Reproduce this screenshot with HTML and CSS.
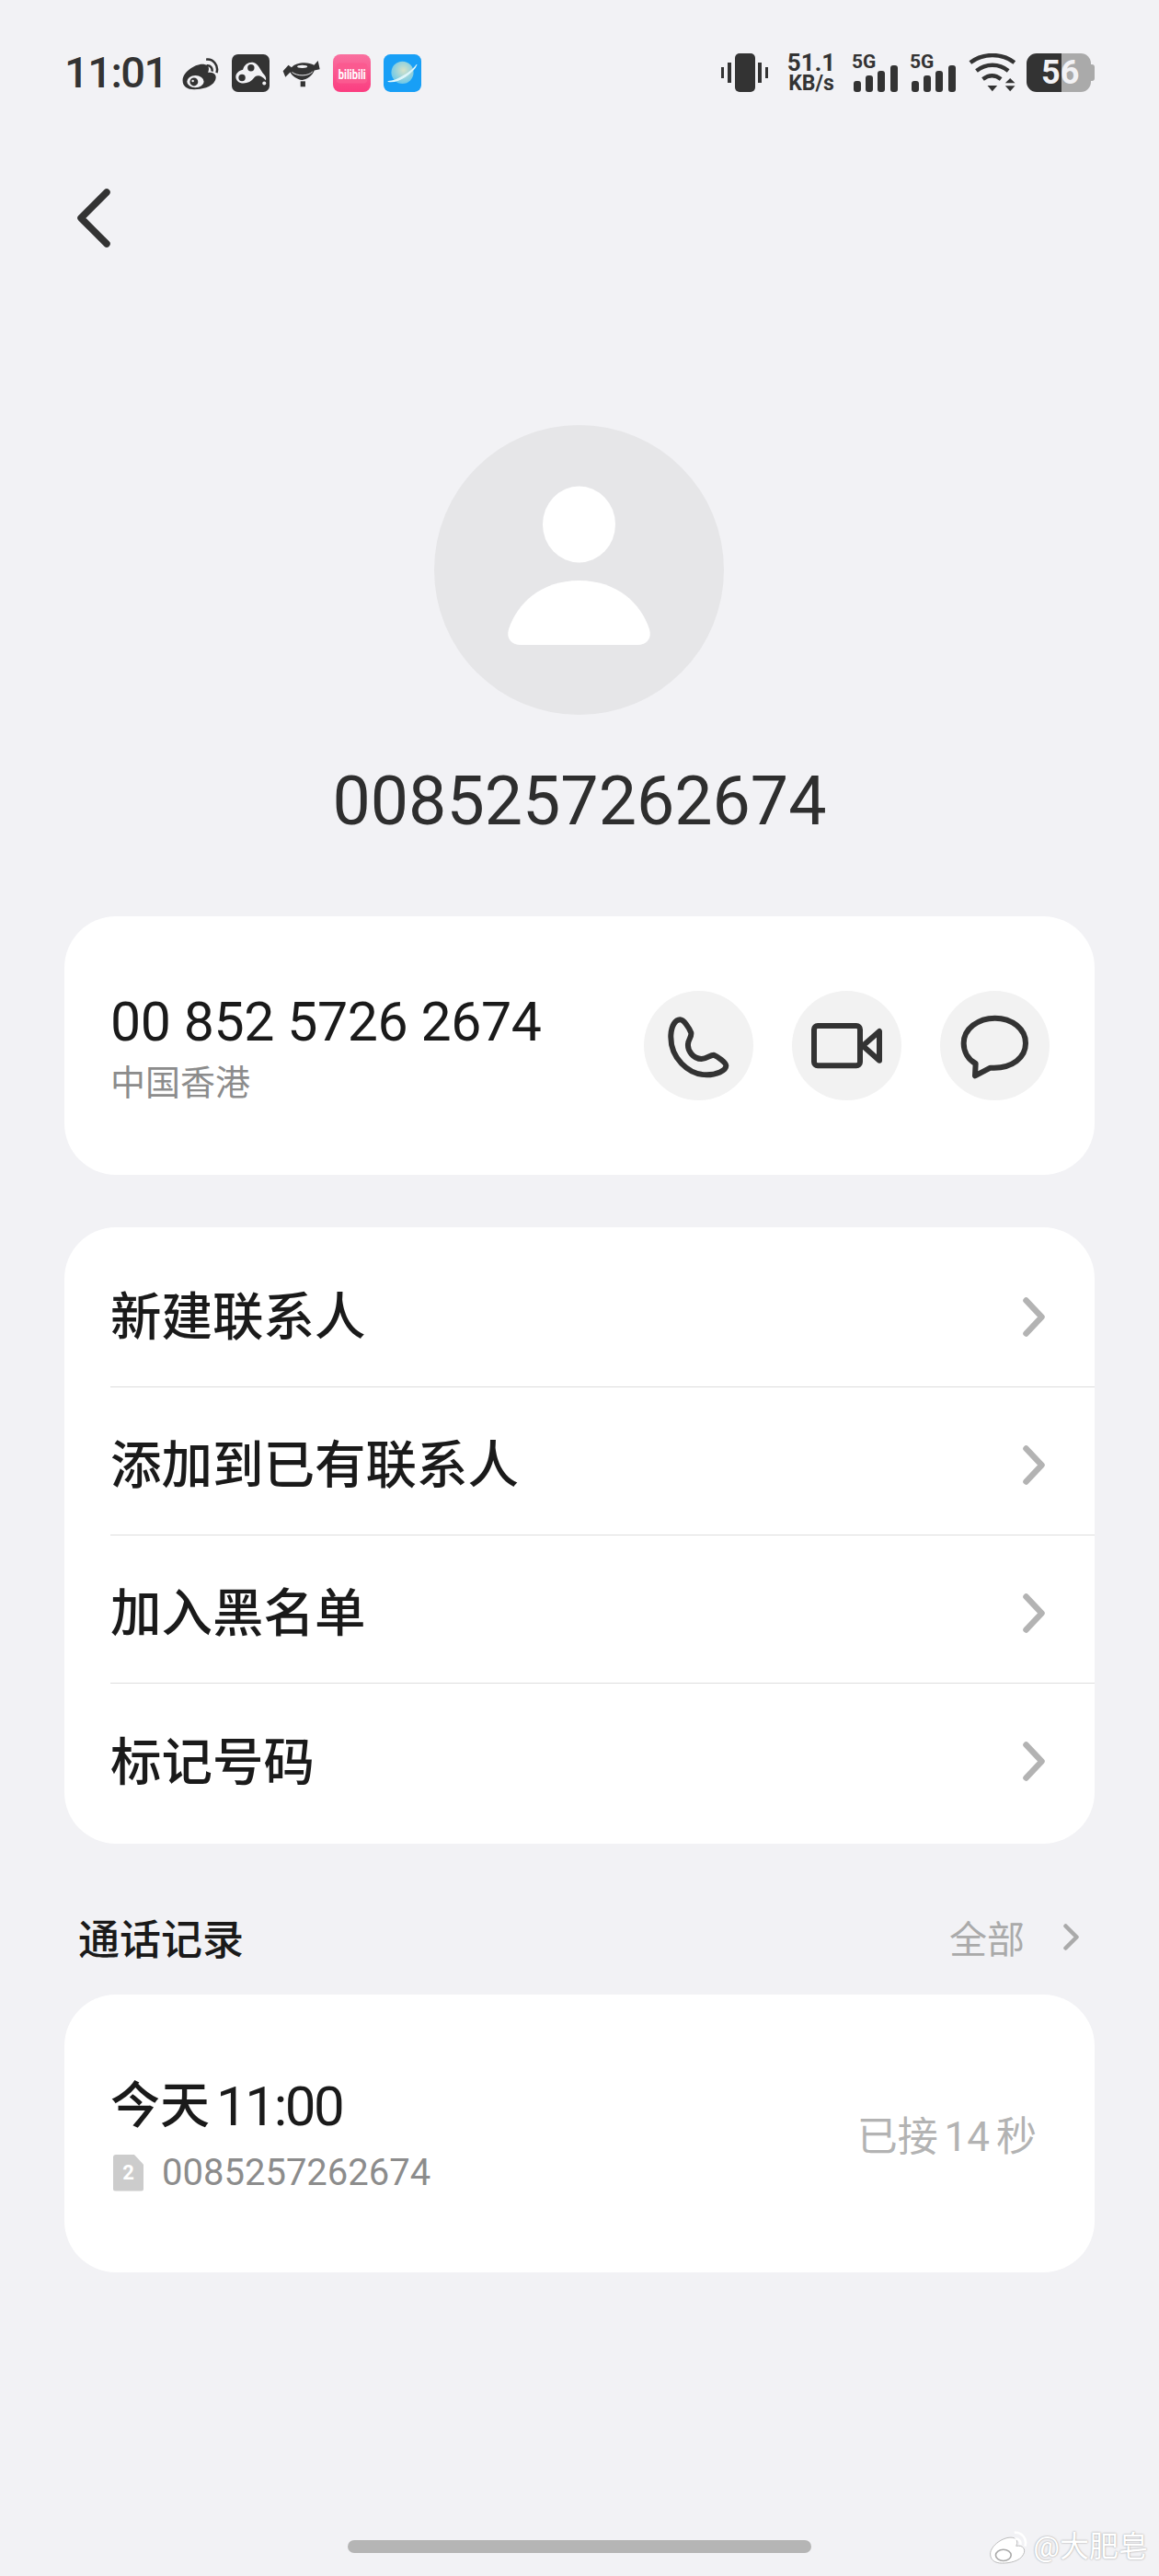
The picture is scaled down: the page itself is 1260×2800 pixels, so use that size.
FILE: index.html
```html
<!DOCTYPE html>
<html lang="zh-CN">
<head>
    <meta charset="UTF-8">
    <meta name="viewport" content="width=device-width, initial-scale=1.0">
    <title>0085257262674</title>
    <link rel="stylesheet" href="styles.css">
</head>
<body>
    <div class="page">
        <div class="status">
            <div class="status-left">
                <span class="time">11:01</span>
                <svg class="app-icon" viewBox="470 84 130 122">
                    <path class="ink" d="M475 170C475 142 520 110 550 115C566 118 568 131 562 143C585 139 596 155 586 172C575 194 540 201 515 201C490 201 475 190 475 170Z"/>
                    <ellipse cx="519" cy="174" rx="29" ry="21" fill="#f2f2f5"/>
                    <circle cx="514" cy="175" r="14" fill="#333"/>
                    <circle cx="510" cy="172" r="4" fill="#f2f2f5"/>
                    <path class="ink-line" d="M556 98C580 95 600 118 592 144M558 119C570 117 579 127 576 139"/>
                </svg>
                <svg class="app-icon" viewBox="640 84 122 122">
                    <rect x="640" y="84" width="122" height="122" rx="20" fill="#333"/>
                    <path d="M676 134C680 116 695 108 708 110C728 114 730 134 745 150C750 156 752 162 750 168C735 152 722 148 712 160C700 178 672 184 658 170C646 156 656 138 676 134Z" fill="#f2f2f5"/>
                    <circle cx="702" cy="128" r="11" fill="#333"/>
                    <circle cx="673" cy="160" r="11" fill="#333"/>
                    <circle cx="745" cy="178" r="6" fill="#f2f2f5"/>
                </svg>
                <svg class="app-icon" viewBox="800 84 125 122">
                    <path class="ink" d="M802 138L820 118L830 126C845 108 885 106 905 118L918 104L924 132L906 136C900 154 880 166 866 168C848 166 832 154 826 142L810 158Z"/>
                    <path d="M832 142C850 156 885 156 900 140" fill="none" stroke="#f2f2f5" stroke-width="3"/>
                    <ellipse cx="866" cy="123" rx="17" ry="5" fill="#f2f2f5"/>
                    <rect x="860" y="172" width="16" height="18" class="ink"/>
                </svg>
                <svg class="app-icon" viewBox="967 84 122 122">
                    <defs>
                        <linearGradient id="bili" x1="0" y1="0" x2="0" y2="1">
                            <stop offset="0" stop-color="#f9709f"/>
                            <stop offset="1" stop-color="#fb3d80"/>
                        </linearGradient>
                        <radialGradient id="planet" cx="0.55" cy="0.4" r="0.7">
                            <stop offset="0" stop-color="#d6e2c8"/>
                            <stop offset="1" stop-color="#5cc4ee"/>
                        </radialGradient>
                    </defs>
                    <rect x="967" y="84" width="122" height="122" rx="24" fill="url(#bili)"/>
                    <rect x="978" y="112" width="100" height="66" rx="12" fill="#fb5a90"/>
                    <text class="bili-text" transform="translate(984 164) scale(1 1.4)">bilibili</text>
                </svg>
                <svg class="app-icon" viewBox="1131 84 122 122">
                    <rect x="1131" y="84" width="122" height="122" rx="22" fill="#189ff6"/>
                    <circle cx="1192" cy="143" r="36" fill="url(#planet)"/>
                    <path d="M1146 172C1175 172 1222 140 1238 118C1228 142 1180 178 1146 172Z" fill="#dff6fb" stroke="#dff6fb" stroke-width="3" stroke-linejoin="round"/>
                </svg>
            </div>
            <div class="status-right">
                <svg class="vibrate" viewBox="0 0 51 42">
                    <rect x="15" y="0" width="22" height="42" rx="5" class="ink"/>
                    <rect x="7" y="10" width="4" height="22" class="ink"/>
                    <rect x="0" y="15" width="3" height="12" class="ink"/>
                    <rect x="40" y="10" width="4" height="22" class="ink"/>
                    <rect x="48" y="15" width="3" height="12" class="ink"/>
                </svg>
                <div class="speed">
                    <span class="speed-num">51.1</span>
                    <span class="speed-unit">KB/s</span>
                </div>
                <div class="signal">
                    <span class="signal-label">5G</span>
                    <svg viewBox="0 0 48 29">
                        <rect x="0" y="17" width="8" height="12" rx="3" class="ink"/>
                        <rect x="13" y="11" width="8" height="18" rx="3" class="ink"/>
                        <rect x="26" y="6" width="8" height="23" rx="3" class="ink"/>
                        <rect x="40" y="0" width="8" height="29" rx="3" class="ink"/>
                    </svg>
                </div>
                <div class="signal">
                    <span class="signal-label">5G</span>
                    <svg viewBox="0 0 48 29">
                        <rect x="0" y="17" width="8" height="12" rx="3" class="ink"/>
                        <rect x="13" y="11" width="8" height="18" rx="3" class="ink"/>
                        <rect x="26" y="6" width="8" height="23" rx="3" class="ink"/>
                        <rect x="40" y="0" width="8" height="29" rx="3" class="ink"/>
                    </svg>
                </div>
                <svg class="wifi" viewBox="876 84 158 126">
                    <path class="wifi-line" d="M884 114C925 82 988 82 1028 114M904 141C935 116 978 116 1008 141M925 168C945 153 965 153 984 168"/>
                    <path class="ink" d="M940 189H972L956 208ZM998 181L1014 165L1030 181ZM998 190H1030L1014 208Z"/>
                </svg>
                <div class="battery">56</div>
            </div>
        </div>

        <svg class="back" viewBox="0 0 40 64">
            <path d="M34 4L6 32L34 60" fill="none" stroke="#333" stroke-width="7.5" stroke-linecap="round" stroke-linejoin="round"/>
        </svg>

        <div class="avatar">
            <svg viewBox="0 0 315 315">
                <ellipse cx="157.500" cy="108" rx="39.500" ry="41.500" fill="#fff"/>
                <path d="M157.500 169C116 169 90 194 81 222C78 232 84 239 94 239H221C231 239 237 232 234 222C225 194 199 169 157.500 169Z" fill="#fff"/>
            </svg>
        </div>
        <div class="name">0085257262674</div>

        <div class="card card-number">
            <div class="number-info">
                <div class="number">00 852 5726 2674</div>
                <div class="region">中国香港</div>
            </div>
            <div class="actions">
                <div class="action">
                    <svg viewBox="120 111 357 357">
                        <path class="action-line" d="M238 205C222 205 210 225 208 255C205 330 265 385 325 385C355 385 388 372 388 355C388 345 360 325 348 320C335 320 325 333 308 333C280 333 262 305 264 285C264 270 276 262 274 248C268 232 250 205 238 205Z"/>
                    </svg>
                </div>
                <div class="action">
                    <svg viewBox="603 111 357 357">
                        <rect class="action-line" x="675" y="225" width="150" height="130" rx="12"/>
                        <path class="action-line" d="M834 290L888 243V338Z"/>
                    </svg>
                </div>
                <div class="action">
                    <svg viewBox="1086 111 357 357">
                        <path class="action-line" d="M1265 200C1320 200 1365 235 1365 282C1365 330 1320 362 1262 362H1250L1200 388L1202 348C1178 335 1163 310 1163 282C1163 235 1210 200 1265 200Z"/>
                    </svg>
                </div>
            </div>
        </div>

        <div class="card card-menu">
            <div class="row"><span>新建联系人</span><svg class="chevron" viewBox="0 0 24 43"><path d="M3.500 3.500L20.500 21.500L3.500 39.500"/></svg></div>
            <div class="row"><span>添加到已有联系人</span><svg class="chevron" viewBox="0 0 24 43"><path d="M3.500 3.500L20.500 21.500L3.500 39.500"/></svg></div>
            <div class="row"><span>加入黑名单</span><svg class="chevron" viewBox="0 0 24 43"><path d="M3.500 3.500L20.500 21.500L3.500 39.500"/></svg></div>
            <div class="row"><span>标记号码</span><svg class="chevron" viewBox="0 0 24 43"><path d="M3.500 3.500L20.500 21.500L3.500 39.500"/></svg></div>
        </div>

        <div class="section-head">
            <span class="section-title">通话记录</span>
            <span class="section-all">全部<svg class="chevron-small" viewBox="0 0 17 29"><path d="M2.500 2.500L14.500 14.500L2.500 26.500"/></svg></span>
        </div>

        <div class="card card-log">
            <div class="log-info">
                <div class="log-time"><span class="log-day">今天</span><span class="log-clock">11:00</span></div>
                <div class="log-number">
                    <span class="sim">2</span>
                    <span>0085257262674</span>
                </div>
            </div>
            <div class="log-result">已接 14 秒</div>
        </div>

        <div class="home-bar"></div>

        <div class="watermark">
            <svg viewBox="470 84 130 122">
                <path d="M475 170C475 142 520 110 550 115C566 118 568 131 562 143C585 139 596 155 586 172C575 194 540 201 515 201C490 201 475 190 475 170Z" fill="#fff" stroke="#bbb" stroke-width="3"/>
                <ellipse cx="519" cy="174" rx="26" ry="19" fill="none" stroke="#aaa" stroke-width="5"/>
                <path d="M556 98C580 95 600 118 592 144M558 119C570 117 579 127 576 139" fill="none" stroke="#fff" stroke-width="8"/>
            </svg>
            <span>@大肥皂</span>
        </div>
    </div>
</body>
</html>
```

FILE: styles.css
```css
* {
    box-sizing: border-box;
}
body {
    margin: 0;
    background-color: #f2f2f5;
    font-family: Roboto, "Noto Sans CJK SC", sans-serif;
    color: #1a1a1a;
}
.page {
    position: relative;
    width: 1260px;
    height: 2800px;
    overflow: hidden;
    padding: 58px 70px 0;
}
.ink {
    fill: #333;
}
.ink-line {
    fill: none;
    stroke: #333;
    stroke-width: 8;
}

/* status bar */
.status {
    display: flex;
    justify-content: space-between;
    align-items: center;
    height: 42px;
}
.status-left {
    display: flex;
    align-items: center;
}
.time {
    width: 127px;
    font-size: 47px;
    font-weight: 500;
    line-height: 42px;
    color: #333;
    letter-spacing: -1.5px;
}
.app-icon {
    width: 41px;
    height: 41px;
    margin-right: 14px;
}
.bili-text {
    font-size: 33px;
    font-weight: 700;
    fill: #fff;
}
.status-right {
    display: flex;
    align-items: center;
}
.vibrate {
    width: 51px;
    height: 42px;
    margin-right: 22px;
}
.speed {
    display: flex;
    flex-direction: column;
    align-items: center;
    width: 50px;
    margin-right: 21px;
    font-weight: 700;
    color: #333;
}
.speed-num {
    font-size: 26px;
    line-height: 23px;
}
.speed-unit {
    font-size: 23px;
    line-height: 22px;
}
.signal {
    position: relative;
    width: 48px;
    height: 42px;
    margin-right: 15px;
    display: flex;
    align-items: flex-end;
}
.signal:nth-child(4) {
    margin-right: 13px;
}
.signal svg {
    width: 48px;
    height: 29px;
}
.signal-label {
    position: absolute;
    left: -2px;
    top: -2px;
    font-size: 21px;
    font-weight: 700;
    line-height: 22px;
    color: #333;
}
.wifi {
    width: 53px;
    height: 42px;
    margin: 0 11px 0 0;
}
.wifi-line {
    fill: none;
    stroke: #333;
    stroke-width: 13;
}
.battery {
    position: relative;
    width: 70px;
    height: 42px;
    margin-right: 4px;
    border-radius: 11px;
    background: linear-gradient(90deg, #333 38px, #aaa 38px);
    color: #f2f2f5;
    font-size: 36px;
    font-weight: 700;
    line-height: 42px;
    padding-left: 16px;
}
.battery::after {
    content: "";
    position: absolute;
    right: -4px;
    top: 12px;
    width: 4px;
    height: 18px;
    border-radius: 0 3px 3px 0;
    background-color: #aaa;
}

/* header */
.back {
    display: block;
    width: 40px;
    height: 64px;
    margin: 105px 0 0 12px;
}
.avatar {
    width: 315px;
    height: 315px;
    margin: 193px 0 0 402px;
    border-radius: 50%;
    background-color: #e6e6e8;
}
.avatar svg {
    display: block;
}
.name {
    margin-top: 52px;
    font-size: 73.500px;
    line-height: 84px;
    text-align: center;
    color: #2e2e2e;
}

/* cards */
.card {
    background-color: #fff;
    border-radius: 56px;
}
.card-number {
    display: flex;
    justify-content: space-between;
    align-items: center;
    height: 281px;
    margin-top: 83px;
    padding: 0 49px 0 50px;
}
.number-info {
    padding-top: 7px;
}
.number {
    font-size: 59px;
    line-height: 64px;
    letter-spacing: -0.4px;
}
.region {
    margin-top: 9px;
    font-size: 38px;
    line-height: 50px;
    color: #8c8c8c;
}
.actions {
    display: flex;
    gap: 42px;
}
.action {
    width: 119px;
    height: 119px;
    border-radius: 50%;
    background-color: #f2f2f2;
}
.action svg {
    display: block;
}
.action-line {
    fill: none;
    stroke: #333;
    stroke-width: 18;
    stroke-linejoin: round;
}
.card-menu {
    margin-top: 57px;
    padding: 13px 0 13px 50px;
}
.row {
    display: flex;
    justify-content: space-between;
    align-items: center;
    height: 161px;
    padding-right: 54px;
    border-bottom: 1px solid #ddd;
    font-size: 55.500px;
    font-weight: 500;
}
.row:last-child {
    border-bottom: none;
}
.chevron {
    width: 24px;
    height: 43px;
    margin-top: 8px;
    fill: none;
    stroke: #b3b3b3;
    stroke-width: 6.500;
    stroke-linecap: round;
    stroke-linejoin: round;
}
.section-head {
    display: flex;
    justify-content: space-between;
    align-items: center;
    height: 60px;
    margin-top: 71px;
    padding: 0 17px 0 15px;
}
.section-title {
    font-size: 45px;
    font-weight: 500;
}
.section-all {
    display: flex;
    align-items: center;
    gap: 42px;
    font-size: 41px;
    color: #aaa;
}
.chevron-small {
    width: 17px;
    height: 29px;
    fill: none;
    stroke: #aaa;
    stroke-width: 4.500;
    stroke-linecap: round;
    stroke-linejoin: round;
}
.card-log {
    display: flex;
    justify-content: space-between;
    align-items: center;
    height: 302px;
    margin-top: 33px;
    padding: 0 63px 0 50px;
}
.log-info {
    padding-top: 5px;
}
.log-time {
    display: flex;
    align-items: center;
    gap: 7px;
    line-height: 66px;
}
.log-day {
    font-size: 54px;
    font-weight: 500;
}
.log-clock {
    font-size: 60px;
    letter-spacing: -2.400px;
}
.log-number {
    display: flex;
    align-items: center;
    gap: 20px;
    margin-top: 14px;
    padding-left: 3px;
    font-size: 40px;
    line-height: 50px;
    color: #8c8c8c;
}
.sim {
    width: 33px;
    height: 40px;
    background-color: #ccc;
    border-radius: 3px;
    clip-path: polygon(0 0, 68% 0, 100% 28%, 100% 100%, 0 100%);
    color: #fff;
    font-size: 22px;
    font-weight: 700;
    line-height: 40px;
    text-align: center;
}
.log-result {
    font-size: 44px;
    word-spacing: -4px;
    color: #b3b3b3;
}

/* bottom */
.home-bar {
    position: absolute;
    left: 378px;
    top: 2761px;
    width: 504px;
    height: 14px;
    border-radius: 7px;
    background-color: #b5b5b5;
}
.watermark {
    position: absolute;
    right: 12px;
    top: 2748px;
    display: flex;
    align-items: center;
    gap: 6px;
    font-size: 32px;
    line-height: 40px;
    white-space: nowrap;
    color: #fff;
    text-shadow: 0 0 2px #8a8a8a;
}
.watermark svg {
    width: 42px;
    height: 40px;
}
```
